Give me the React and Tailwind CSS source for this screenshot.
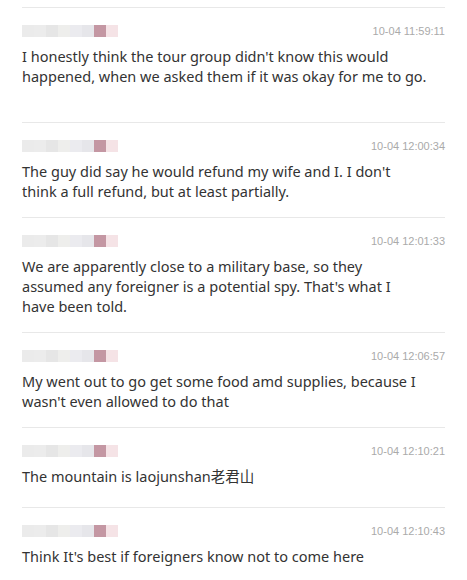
import React from 'react';

const comments = [
  {
    id: 1,
    time: '10-04 11:59:11',
    lines: ["I honestly think the tour group didn't know this would", 'happened, when we asked them if it was okay for me to go.'],
    extra: 'pb-[36px]',
  },
  {
    id: 2,
    time: '10-04 12:00:34',
    lines: ["The guy did say he would refund my wife and I. I don't", 'think a full refund, but at least partially.'],
    extra: 'pb-[16px]',
  },
  {
    id: 3,
    time: '10-04 12:01:33',
    lines: ['We are apparently close to a military base, so they', "assumed any foreigner is a potential spy. That's what I", 'have been told.'],
    extra: 'pb-[16px]',
  },
  {
    id: 4,
    time: '10-04 12:06:57',
    lines: ['My went out to go get some food amd supplies, because I', "wasn't even allowed to do that"],
    extra: 'pb-[16px]',
  },
  {
    id: 5,
    time: '10-04 12:10:21',
    lines: ['The mountain is laojunshan老君山'],
    extra: 'pb-[21px]',
  },
  {
    id: 6,
    time: '10-04 12:10:43',
    lines: ["Think It's best if foreigners know not to come here"],
    extra: 'pb-[16px]',
  },
];

const blocks = ['bg-[#ebebeb]', 'bg-[#ececec]', 'bg-[#e6e6e6]', 'bg-[#eeeeec]', 'bg-[#ebebef]', 'bg-[#e6e6ea]', 'bg-[#c497a3]', 'bg-[#f5e3e6]'];

function BlurName() {
  return (
    <div className="flex h-[12px]">
      {blocks.map((b, i) => (
        <span key={i} className={`h-full w-[12px] ${b}`} />
      ))}
    </div>
  );
}

export default function App() {
  return (
    <div className="h-[580px] w-[467px] overflow-hidden bg-white px-[22px] pt-[7px] font-['Noto_Sans','Noto_Sans_CJK_SC',sans-serif]">
      {comments.map((c) => (
        <div key={c.id} className={`border-t border-[#e8e8e8] pt-[17px] ${c.extra}`}>
          <div className="flex items-center justify-between">
            <BlurName />
            <span className="text-[11px] leading-[12px] text-[#aaaaaa] font-['Liberation_Sans',sans-serif]">
              {c.time}
            </span>
          </div>
          <div className="mt-[9px] text-[14.5px] leading-[20px] text-[#333333]">
            {c.lines.map((l) => (
              <p key={l} className="whitespace-nowrap">{l}</p>
            ))}
          </div>
        </div>
      ))}
    </div>
  );
}
